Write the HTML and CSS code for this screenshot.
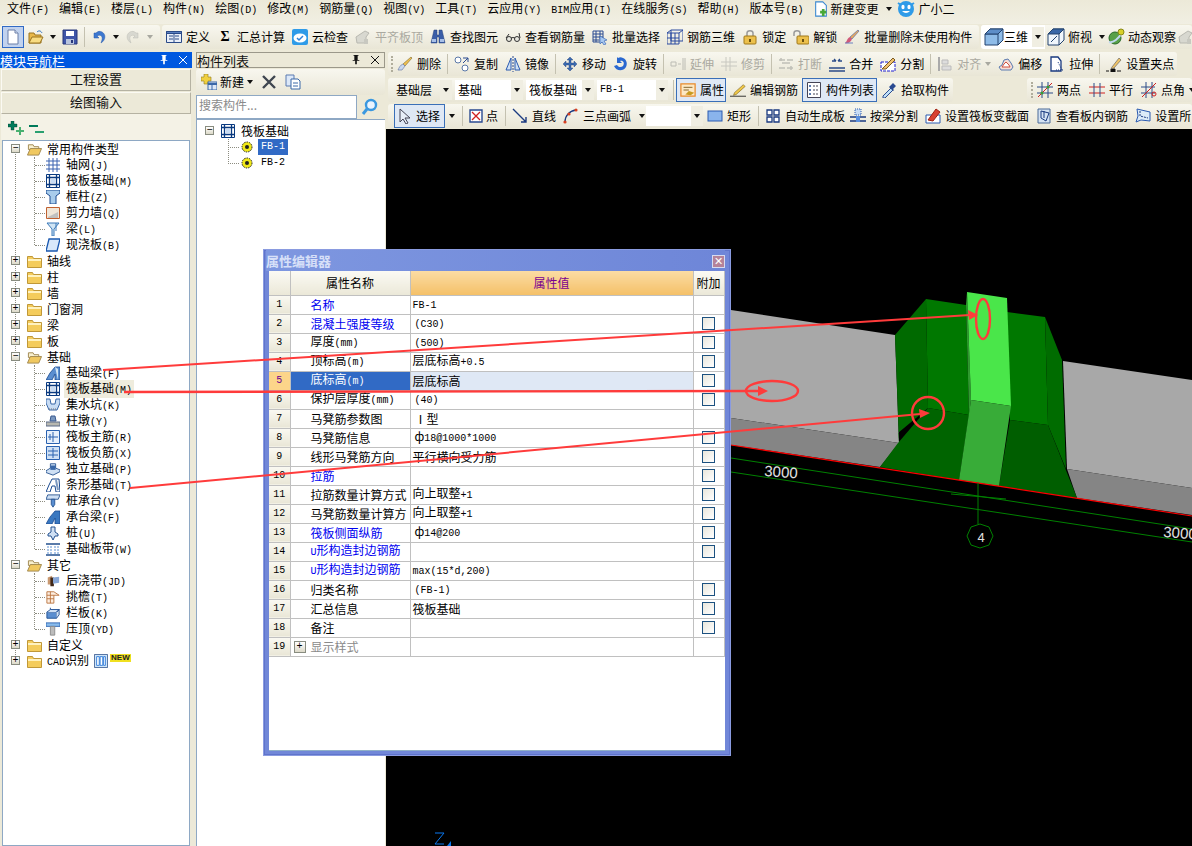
FILE: index.html
```html
<!DOCTYPE html>
<html lang="zh-CN">
<head>
<meta charset="utf-8">
<title>属性编辑器</title>
<link rel="stylesheet" href="styles.css">
</head>
<body>
<svg class="sprites" xmlns="http://www.w3.org/2000/svg">
<symbol id="doc" viewBox="0 0 16 16"><path d="M3 1h7l3 3v11H3z" fill="#fff" stroke="#6a7fa8"/><path d="M10 1v3h3" fill="#dde6f5" stroke="#6a7fa8"/></symbol>
<symbol id="open" viewBox="0 0 16 16"><path d="M1 4h5l1 2h6v8H1z" fill="#e8b84a" stroke="#9a7420"/><path d="M1 14l3-6h11l-3 6z" fill="#f8dc82" stroke="#9a7420"/><path d="M9 3c2-2 4-1 5 1" fill="none" stroke="#2a6fc0"/></symbol>
<symbol id="save" viewBox="0 0 16 16"><path d="M1 1h14v14H1z" fill="#3f55a8" stroke="#26367a"/><path d="M4 2h8v5H4z" fill="#fff"/><path d="M4 10h8v5H4z" fill="#b8c4de"/><path d="M9 11h2v3H9z" fill="#26367a"/></symbol>
<symbol id="undo" viewBox="0 0 16 16"><path d="M3 4v5h5L6 7c3-2 6 0 5 4l-1 3c5-3 5-9 1-11-2-1-4-1-6 1z" fill="#3d78d0" stroke="#2a58a8" stroke-width=".5"/></symbol>
<symbol id="redo" viewBox="0 0 16 16"><path d="M13 4v5H8l2-2c-3-2-6 0-5 4l1 3C1 11 1 5 5 3c2-1 4-1 6 1z" fill="#d8d8d0" stroke="#bdbdb4" stroke-width=".5"/></symbol>
<symbol id="def" viewBox="0 0 16 16"><path d="M.5 2.500h15v11H.5z" fill="#e8eef8" stroke="#2a4a88"/><path d="M.5 2.500h15v2H.5z" fill="#5a80c0" stroke="#2a4a88"/><path d="M3 7h4M3 10h4M9 7h4M9 10h4M8 5v8" stroke="#2a4a88" fill="none"/></symbol>
<symbol id="cloud" viewBox="0 0 16 16"><rect y="0" width="16" height="16" rx="2" fill="#2f9be8"/><ellipse cx="8" cy="9" rx="6.500" ry="4.500" fill="#fff"/><path d="M5 9l2 2 4-4" fill="none" stroke="#2f80d8" stroke-width="1.500"/></symbol>
<symbol id="flat" viewBox="0 0 16 16"><path d="M1 8l9-6 4 2-3 4v6H2z" fill="#d8d8d0" stroke="#b8b8b0"/><path d="M9 10h4v5H9z" fill="#c8c8c0"/></symbol>
<symbol id="binoc" viewBox="0 0 16 16"><path d="M4 1h3v5h2V1h3l3 13h-6V8H7v6H1z" fill="#3a5ea8" stroke="#24407a" stroke-width=".5"/><path d="M2 10h4v3H2zM10 10h4v3h-4z" fill="#a8c0e8"/></symbol>
<symbol id="glass" viewBox="0 0 16 16"><circle cx="4" cy="10" r="2.500" fill="#e8e8e0" stroke="#333"/><circle cx="12" cy="10" r="2.500" fill="#e8e8e0" stroke="#333"/><path d="M6 9q2-1 4 0M1 9l3-4M15 9l-1-5" fill="none" stroke="#333"/></symbol>
<symbol id="batch" viewBox="0 0 16 16"><path d="M1 2h10v11H1zM1 5h10M1 8h10M1 11h8M4 2v11M8 2v8" fill="none" stroke="#2a4a90"/><path d="M8 7l7 4-3 1 2 3-2 1-2-3-2 2z" fill="#a8c8f0" stroke="#2a5ab0" stroke-width=".6"/></symbol>
<symbol id="rebar" viewBox="0 0 16 16"><path d="M0 4l4-3h12M0 4h12l4-3M0 4v11M12 4v11M0 15h12M4 1v11h12V1M0 9h12M4 4v11M8 4v11" fill="none" stroke="#2a4aa0"/></symbol>
<symbol id="lock" viewBox="0 0 16 16"><path d="M5 7V4c0-3 6-3 6 0v3" fill="none" stroke="#999" stroke-width="1.500"/><rect x="2" y="7" width="12" height="8" rx="1" fill="#ecc04c" stroke="#a07818"/><path d="M7 10h2v3H7z" fill="#6a5010"/></symbol>
<symbol id="unlock" viewBox="0 0 16 16"><path d="M1 7V4c0-3 6-3 6 0v3" fill="none" stroke="#999" stroke-width="1.500"/><rect x="4" y="7" width="12" height="8" rx="1" fill="#ecc04c" stroke="#a07818"/><path d="M9 10h2v3H9z" fill="#6a5010"/></symbol>
<symbol id="brush" viewBox="0 0 16 16"><path d="M14 1l1 1-7 8-2-2z" fill="#e8a860" stroke="#4060a8" stroke-width=".6"/><path d="M6 8l2 2c-1 3-4 5-7 4 2-1 2-5 5-6z" fill="#d05a7a"/><path d="M1 14h8" stroke="#6a80c0"/></symbol>
<symbol id="cube" viewBox="0 0 20 18"><path d="M1 6l5-5h13v11l-5 5H1z" fill="#8fbce8" stroke="#23436e"/><path d="M1 6h13v11M14 6l5-5" fill="none" stroke="#23436e"/><path d="M1 6l5-5h13l-5 5z" fill="#5e8ec8" stroke="#23436e"/></symbol>
<symbol id="top" viewBox="0 0 18 18"><path d="M1 6l5-5h11v11l-5 5H1z" fill="#f0f6fc" stroke="#23436e"/><path d="M1 6l5-5h11l-5 5z" fill="#3a68a8" stroke="#23436e"/><path d="M12 6v11M12 6l5-5M4 14l6-6" fill="none" stroke="#23436e"/></symbol>
<symbol id="orbit" viewBox="0 0 18 18"><circle cx="8" cy="10" r="6" fill="#58a048" stroke="#2a6a28"/><path d="M2 14c4 1 10-3 13-10" fill="none" stroke="#c0d8f0" stroke-width="2"/><circle cx="14" cy="4" r="3" fill="#d8d028" stroke="#888818"/></symbol>
<symbol id="erase" viewBox="0 0 16 16"><path d="M14 1l1 1-7 8-2-2z" fill="#f0c050" stroke="#7a6a30" stroke-width=".6"/><path d="M6 8l2 2-3 4-4 0c1-2 2-5 5-6z" fill="#c8d8f0" stroke="#6070a0" stroke-width=".6"/></symbol>
<symbol id="copy" viewBox="0 0 16 16"><circle cx="4" cy="4" r="3" fill="#fff" stroke="#5a78a8"/><circle cx="11" cy="12" r="3" fill="#fff" stroke="#5a78a8"/><path d="M9 2h5v4M14 2L9 7" fill="none" stroke="#2a4a90"/></symbol>
<symbol id="mirror" viewBox="0 0 16 16"><path d="M6 2L1 14h5zM10 2l5 12h-5z" fill="#cfe0f4" stroke="#2a5ab0"/><path d="M8 0v16" stroke="#2a4a90" stroke-dasharray="2 1"/></symbol>
<symbol id="move" viewBox="0 0 16 16"><path d="M8 1l3 3H9v3h3V5l3 3-3 3V9H9v3h2l-3 3-3-3h2V9H4v2L1 8l3-3v2h3V4H5z" fill="#3a6ab0" stroke="#24407a" stroke-width=".4"/></symbol>
<symbol id="rotate" viewBox="0 0 16 16"><path d="M4 1v6h5L7 5c3-1 5 2 3 5-2 2-5 1-6-1l-3 1c2 5 9 6 12 1 2-4 0-8-3-9-2-1-3-1-5 0z" fill="#2a68d0"/></symbol>
<symbol id="extend" viewBox="0 0 16 16"><path d="M1 6h5v4H1zM8 8h3M13 2v12M15 2v12" fill="none" stroke="#bcbcb4"/></symbol>
<symbol id="trim" viewBox="0 0 16 16"><path d="M0 6h16M0 10h16M5 1v14M9 1v14" fill="none" stroke="#c8c8c0"/></symbol>
<symbol id="break" viewBox="0 0 16 16"><path d="M1 4h6M9 4h6M1 12h6M9 12h6M4 7h8M3 2v3M13 10v4" fill="none" stroke="#c0c0b8" stroke-width="1.500"/></symbol>
<symbol id="merge" viewBox="0 0 16 16"><path d="M0 12h16M0 15h16M3 5h4M9 5h4M7 5L5 3M9 5l2-2" fill="none" stroke="#2a4a88" stroke-width="1.300"/></symbol>
<symbol id="split" viewBox="0 0 16 16"><path d="M1 6h14v9H1z" fill="#fff" stroke="#2020d0" stroke-dasharray="3 1"/><path d="M2 13L13 2l2 2L6 13z" fill="#f0c070" stroke="#7a5a20"/></symbol>
<symbol id="align" viewBox="0 0 16 16"><path d="M2 1v14" stroke="#aaa" stroke-width="2"/><path d="M5 4h6v4H5zM5 10h9v4H5z" fill="#ddd" stroke="#bbb"/></symbol>
<symbol id="offset" viewBox="0 0 16 16"><path d="M1 11l3-2 2-5 4-1 3 4 2 4-2 3H3z" fill="#f6dcd4" stroke="#5a7ab0"/><path d="M4 11l2-3 2-2 3 3 1 2z" fill="#fff" stroke="#d05040"/></symbol>
<symbol id="stretch" viewBox="0 0 16 16"><path d="M2 1h7l3 4v10H2z" fill="#fff" stroke="#1a3a80" stroke-width="1.300"/><path d="M9 6l4 8M7 14h7" fill="none" stroke="#1a3a80" stroke-dasharray="1 1"/></symbol>
<symbol id="grip" viewBox="0 0 16 16"><path d="M0 15h3M5 13h4v3H5zM11 15h4" stroke="#111" fill="#111"/><path d="M6 11L13 2l2 2-7 8-3 1z" fill="#f0c468" stroke="#555" stroke-width=".6"/></symbol>
<symbol id="prop" viewBox="0 0 18 16"><path d="M1 1h16v14H1z" fill="#fde8c4" stroke="#e88a2c" stroke-width="1.400"/><path d="M4 5h10M4 8h6" stroke="#7a5a20"/><path d="M6 13l4-4 6 2-4 3z" fill="#c89a20"/></symbol>
<symbol id="pencil" viewBox="0 0 18 16"><path d="M5 11L15 2l2 2-10 9-3 1z" fill="#f0c848" stroke="#6a5010" stroke-width=".6"/><path d="M0 15h18" stroke="#222"/></symbol>
<symbol id="list" viewBox="0 0 14 16"><path d="M.5.500h13v15H.5z" fill="#fff" stroke="#445"/><path d="M2 3h2v2H2zM2 7h2v2H2zM2 11h2v2H2z" fill="#5a7ab0"/><path d="M6 4h6M6 8h6M6 12h6" stroke="#445" stroke-dasharray="2 1"/></symbol>
<symbol id="drop" viewBox="0 0 16 16"><path d="M2 14l8-8 2 2-8 8H2z" fill="#bfe0f8" stroke="#2a4a90"/><path d="M9 4l3-3 3 3-3 3 1 1-1 1-4-4 1-1z" fill="#2a4a90"/></symbol>
<symbol id="twopt" viewBox="0 0 16 16"><path d="M0 5h16M0 11h16M5 0v16M11 0v16" stroke="#2a4a88" fill="none"/><path d="M1 15L15 1" stroke="#d02020"/><circle cx="11" cy="5" r="1.500" fill="#3a9a30"/><circle cx="5" cy="11" r="1.500" fill="#3a9a30"/></symbol>
<symbol id="para" viewBox="0 0 16 16"><path d="M0 5h16M0 11h16" stroke="#d02020"/><path d="M5 1v14M11 1v14" stroke="#2a4a88"/></symbol>
<symbol id="angle" viewBox="0 0 16 16"><path d="M0 5h14M0 11h14M5 0v16M11 0v16" stroke="#2a4a88" fill="none"/><path d="M1 15L15 1" stroke="#d02020"/><circle cx="13" cy="12" r="2" fill="none" stroke="#d02020"/></symbol>
<symbol id="cursor" viewBox="0 0 16 16"><path d="M3 1l10 9H8l3 5-2 1-3-5-3 3z" fill="#e8eef8" stroke="#445"/></symbol>
<symbol id="point" viewBox="0 0 14 14"><path d="M1 1h12v12H1z" fill="#fff" stroke="#2a4a90" stroke-width="1.400"/><path d="M3 3l8 8M11 3l-8 8" stroke="#d02020" stroke-width="1.300"/></symbol>
<symbol id="line" viewBox="0 0 16 16"><path d="M1 1l13 13M14 9v5H9" fill="none" stroke="#1a3a80" stroke-width="1.400"/></symbol>
<symbol id="arc" viewBox="0 0 16 16"><path d="M2 14C2 8 6 3 13 2" fill="none" stroke="#1a3a80" stroke-width="1.300"/><circle cx="2" cy="14" r="1.600" fill="#d84020"/><circle cx="6" cy="6" r="1.600" fill="#d84020"/><circle cx="13" cy="2" r="1.600" fill="#d84020"/></symbol>
<symbol id="rect" viewBox="0 0 16 16"><rect x="1" y="3" width="14" height="10" fill="#8ab4ec" stroke="#2a5ab0"/></symbol>
<symbol id="auto" viewBox="0 0 16 16"><path d="M2 2h5v5H2zM9 2h5v5H9zM2 9h5v5H2zM9 9h5v5H9z" fill="#fff" stroke="#1a3a80" stroke-width="1.300"/></symbol>
<symbol id="bsplit" viewBox="0 0 16 16"><path d="M5 1h6v6H5z" fill="#c8dcf4" stroke="#2a5ab0" stroke-dasharray="1 1"/><path d="M0 9h16M0 13h16" stroke="#1a3a80" stroke-width="1.300"/><path d="M6 8h4v6H6z" fill="#5a90e0"/></symbol>
<symbol id="sect" viewBox="0 0 16 16"><path d="M1 7h14v8H1z" fill="#fff" stroke="#2a5ab0"/><path d="M3 12L11 1l4 3-7 9z" fill="#d84030" stroke="#a02010"/></symbol>
<symbol id="see" viewBox="0 0 16 16"><path d="M2 1h12v14H2z" fill="#d4e2f2" stroke="#4a6a98"/><path d="M5 3l8 2-3 8-5-3zM8 3v7" fill="none" stroke="#1a3a80"/></symbol>
<symbol id="setp" viewBox="0 0 16 16"><path d="M2 1l13 3v9l-9-1-5 2 2-6z" fill="#dcebf8" stroke="#2a5ab0"/><path d="M5 3v5l8 2" fill="none" stroke="#1a3a80" stroke-dasharray="2 1"/></symbol>
<symbol id="chg" viewBox="0 0 16 18"><path d="M2 1h8l4 4v12H2z" fill="#fff" stroke="#3a88d0" stroke-width="1.200"/><path d="M9 9h3v2h2v3h-2v3H9v-3H7v-3h2z" fill="#48a838"/></symbol>
<symbol id="mascot" viewBox="0 0 18 18"><circle cx="9" cy="9" r="8" fill="#2f9be8"/><path d="M1 3l3 2M17 3l-3 2" stroke="#2f9be8" stroke-width="2"/><ellipse cx="6" cy="7" rx="1.600" ry="2.200" fill="#fff"/><ellipse cx="12" cy="7" rx="1.600" ry="2.200" fill="#fff"/><path d="M5 11q4 4 8 0z" fill="#fff"/></symbol>
<symbol id="plusplus" viewBox="0 0 18 14"><path d="M3 0h3v3h3v3H6v3H3V6H0V3h3z" fill="#007a5a" stroke="#003a2a" stroke-width=".4"/><path d="M11 6h2v3h3v2h-3v3h-2v-3H8V9h3z" fill="#48b070"/></symbol>
<symbol id="minmin" viewBox="0 0 16 12"><path d="M0 2h9v2H0z" fill="#007a5a"/><path d="M6 8h9v2H6z" fill="#2aa070"/></symbol>
<symbol id="newitem" viewBox="0 0 16 16"><path d="M3 0h4v3h3v4H7v3H3V7H0V3h3z" fill="#f0d040" stroke="#907818" stroke-width=".6"/><path d="M7 8h9v8H7z" fill="#dce8f8" stroke="#3a68a8"/><path d="M7 10h9" stroke="#3a68a8" stroke-width="2"/><path d="M11 10v6" stroke="#3a68a8"/></symbol>
<symbol id="xbig" viewBox="0 0 14 14"><path d="M1 1l12 12M13 1L1 13" stroke="#3f4650" stroke-width="2.400"/></symbol>
<symbol id="paste" viewBox="0 0 16 16"><path d="M1 1h8v11H1z" fill="#dce8f8" stroke="#5a7ab0"/><path d="M6 5h7l2 2v8H6z" fill="#fff" stroke="#3a68a8"/><path d="M8 9h5M8 12h5" stroke="#3a68a8"/></symbol>
<symbol id="find" viewBox="0 0 18 18"><circle cx="10" cy="7" r="5" fill="#eaf4ff" stroke="#3a98e0" stroke-width="2.400"/><path d="M6 11l-4 5" stroke="#3a98e0" stroke-width="3"/></symbol>
<symbol id="fold" viewBox="0 0 15 14"><path d="M.5 2.500h5l1 2h8v9H.5z" fill="#f4cc5c" stroke="#c09838"/><path d="M1 5h13v2H1z" fill="#fff2c0"/></symbol>
<symbol id="foldo" viewBox="0 0 16 14"><path d="M1.500 2.500h5l1 2h5v3h-11z" fill="#f8f0d0" stroke="#a08850"/><path d="M.5 13.500l3-7h12l-3 7z" fill="#f0c860" stroke="#a08850"/></symbol>
<symbol id="grid" viewBox="0 0 14 14"><path d="M3 0v14M7 0v14M11 0v14M0 3h14M0 7h14M0 11h14" stroke="#3a62b0" fill="none"/></symbol>
<symbol id="raft" viewBox="0 0 14 14"><path d="M.5.500h13v13H.5z" fill="#fff" stroke="#0a3a80"/><path d="M0 3.500h14M0 10.500h14M3.500 0v14M10.500 0v14" stroke="#0a3a80" stroke-width="1.300"/><path d="M5 5h4v4H5z" fill="#c8dcf4"/></symbol>
<symbol id="col" viewBox="0 0 14 14"><path d="M0 0h14v3l-4 3v8H4V6L0 3z" fill="#a8ccec" stroke="#1a4a90"/></symbol>
<symbol id="wall" viewBox="0 0 14 14"><path d="M.5 1.500h13v11H.5z" fill="#f0e6d8" stroke="#c06030"/><path d="M2 11l10-5v6H2z" fill="#c0c0c0"/></symbol>
<symbol id="beam" viewBox="0 0 14 14"><path d="M1 1h12L8 7v7H6V7z" fill="#cfe4f4" stroke="#3a78b8"/><path d="M10 1v8" stroke="#3a78b8"/></symbol>
<symbol id="slab" viewBox="0 0 14 14"><path d="M3 1h11l-3 12H0z" fill="#d8e8fa" stroke="#1a58b0" stroke-width="1.300"/></symbol>
<symbol id="fbeam" viewBox="0 0 14 14"><path d="M0 14l4-7 5-6h5v13H9V8l-3 6z" fill="#5a8ed0" stroke="#1a4a90" stroke-width=".8"/><path d="M9 1l3 2v11" fill="#cfe4f4"/></symbol>
<symbol id="pit" viewBox="0 0 14 14"><path d="M0 1h4l1 5h4l1-5h4v4l-3 7H3L0 5z" fill="#c8dcf4" stroke="#3a68a8"/><path d="M3 11h8" stroke="#777" stroke-dasharray="1 1"/></symbol>
<symbol id="cap" viewBox="0 0 14 14"><path d="M5 2h4l1 5H4z" fill="#7a98c0" stroke="#3a5a90"/><path d="M0 8h14v4H0z" fill="#b8b8b0" stroke="#5a6a88"/></symbol>
<symbol id="rmain" viewBox="0 0 14 14"><path d="M.5.500h13v13H.5z" fill="#e6f0fc" stroke="#2a62b0"/><path d="M7 2v10M2 7h10M4 4v6" stroke="#2a62b0" fill="none"/></symbol>
<symbol id="rneg" viewBox="0 0 14 14"><path d="M.5.500h13v13H.5z" fill="#cfe0f4" stroke="#2a62b0"/><path d="M2 5h10M2 9h10M7 2v10" stroke="#2a62b0" fill="none"/></symbol>
<symbol id="iso" viewBox="0 0 16 14"><path d="M0 9l5-3V1h6v5l5 2v2l-8 4-8-3z" fill="#cfe0f4" stroke="#23508e"/><path d="M5 3h6v5H5z" fill="#3a68a8"/></symbol>
<symbol id="strip" viewBox="0 0 14 14"><path d="M0 14l3-7 3-6h7l1 13h-4L9 8H6L4 14z" fill="#fff" stroke="#1a4a90"/><path d="M10 2l2 10" stroke="#7a98c0" stroke-width="2"/></symbol>
<symbol id="pcap" viewBox="0 0 16 14"><path d="M2 0h14l-2 5H0z" fill="#cfe0f4" stroke="#23508e"/><path d="M6 5h4v6l-2 3-2-3z" fill="#5a8ed0" stroke="#23508e"/></symbol>
<symbol id="cbeam" viewBox="0 0 14 14"><path d="M0 14l4-7 5-6h5v13H9V8l-3 6z" fill="#3a78c0" stroke="#1a4a90" stroke-width=".8"/></symbol>
<symbol id="pile" viewBox="0 0 10 14"><path d="M3 1h4v5l3 2v2H7l-2 4-2-4H0V8l3-2z" fill="#cfe0f4" stroke="#23508e"/></symbol>
<symbol id="band" viewBox="0 0 14 14"><path d="M0 2h14M0 13h14" stroke="#23508e" stroke-width="1.400"/><path d="M2 4v8M5 4v8M9 4v8M12 4v8" stroke="#5a8ed0" stroke-dasharray="2 1"/></symbol>
<symbol id="post" viewBox="0 0 16 14"><path d="M2 3l5-2v10H2z" fill="#c89870"/><path d="M5 3h4v10H5z" fill="#402818"/><path d="M8 3l7-1v7l-7 1z" fill="#88a8d8"/></symbol>
<symbol id="cant" viewBox="0 0 16 14"><path d="M1 1h8l6 4H9v9H1z" fill="#fdeee0" stroke="#b8703a"/><path d="M1 5h8M1 9h8M5 1v13" stroke="#b8703a"/></symbol>
<symbol id="para2" viewBox="0 0 16 14"><path d="M1 6h11v7H1z" fill="#5a8ed0" stroke="#1a4a90"/><path d="M1 6l4-3h10l-3 3M12 6l3-3v6l-3 4M5 3V1" fill="#cfe0f4" stroke="#1a4a90"/></symbol>
<symbol id="press" viewBox="0 0 16 14"><path d="M0 0h16v4H0z" fill="#8abcec" stroke="#2a62b0"/><path d="M5 4h5v10H5z" fill="#bcbcbc" stroke="#888"/></symbol>
<symbol id="cad" viewBox="0 0 16 16"><path d="M.5.500h15v15H.5z" fill="#cfe6fa" stroke="#3a5a90"/><path d="M3 3h3v10H3zM7 3h3v10H7zM11 3h2v10h-2z" fill="#fff" stroke="#2a78d8"/></symbol>
<symbol id="gear" viewBox="0 0 12 12"><circle cx="6" cy="6" r="5" fill="#f0e818" stroke="#202020" stroke-dasharray="1.500 1"/><circle cx="6" cy="6" r="2" fill="#202020"/></symbol>
<symbol id="pin" viewBox="0 0 10 12"><path d="M2 0h6v1H7v5h2v1H6v4H4V7H1V6h2V1H2z" fill="currentColor"/></symbol>
<symbol id="close" viewBox="0 0 10 10"><path d="M1 1l8 8M9 1l-8 8" stroke="currentColor" fill="none"/></symbol>
</svg>

<div class="menu">
  <span>文件<b>(F)</b></span><span>编辑<b>(E)</b></span><span>楼层<b>(L)</b></span><span>构件<b>(N)</b></span><span>绘图<b>(D)</b></span><span>修改<b>(M)</b></span><span>钢筋量<b>(Q)</b></span><span>视图<b>(V)</b></span><span>工具<b>(T)</b></span><span>云应用<b>(Y)</b></span><span><b>BIM</b>应用<b>(I)</b></span><span>在线服务<b>(S)</b></span><span>帮助<b>(H)</b></span><span>版本号<b>(B)</b></span>
  <span class="t mi"><svg class="i"><use href="#chg"/></svg>新建变更<i class="dd"></i></span>
  <span class="t mi2"><svg class="i18"><use href="#mascot"/></svg>广小二</span>
</div>

<div class="row1">
  <div class="bar b-file">
    <span class="sel-doc"><svg class="i"><use href="#doc"/></svg></span>
    <svg class="i"><use href="#open"/></svg><i class="dd"></i>
    <svg class="i"><use href="#save"/></svg><i class="sep"></i>
    <svg class="i"><use href="#undo"/></svg><i class="dd"></i>
    <svg class="i"><use href="#redo"/></svg><i class="dd off"></i>
  </div>
  <div class="bar b-main">
    <span class="t"><svg class="i"><use href="#def"/></svg>定义</span>
    <span class="t"><em class="sigma">Σ</em>汇总计算</span>
    <span class="t"><svg class="i"><use href="#cloud"/></svg>云检查</span>
    <span class="t off"><svg class="i"><use href="#flat"/></svg>平齐板顶</span>
    <span class="t"><svg class="i"><use href="#binoc"/></svg>查找图元</span>
    <span class="t"><svg class="i"><use href="#glass"/></svg>查看钢筋量</span>
    <span class="t"><svg class="i"><use href="#batch"/></svg>批量选择</span>
    <span class="t"><svg class="i"><use href="#rebar"/></svg>钢筋三维</span>
    <span class="t"><svg class="i"><use href="#lock"/></svg>锁定</span>
    <span class="t"><svg class="i"><use href="#unlock"/></svg>解锁</span>
    <span class="t"><svg class="i"><use href="#brush"/></svg>批量删除未使用构件</span>
  </div>
  <div class="bar b-view">
    <span class="view3d"><svg class="i20"><use href="#cube"/></svg>三维<i class="ddbox"><i class="dd"></i></i></span>
    <span class="t"><svg class="i18"><use href="#top"/></svg>俯视<i class="dd"></i></span>
    <span class="t"><svg class="i18"><use href="#orbit"/></svg>动态观察</span>
    <span class="t off"><svg class="i"><use href="#flat"/></svg></span>
  </div>
</div>

<div class="main">
  <aside class="nav">
    <div class="title active"><span>模块导航栏</span><span class="ctl"><svg class="i10"><use href="#pin"/></svg><svg class="i10"><use href="#close"/></svg></span></div>
    <button class="navbtn" type="button">工程设置</button>
    <button class="navbtn" type="button">绘图输入</button>
    <div class="navtools"><svg class="pp"><use href="#plusplus"/></svg><svg class="mm"><use href="#minmin"/></svg></div>
    <div class="tree">
      <div class="n"><u class="ex">−</u><svg class="f"><use href="#foldo"/></svg><span>常用构件类型</span></div>
      <div class="kids">
        <div class="k"><svg class="i14"><use href="#grid"/></svg><span>轴网<b>(J)</b></span></div>
        <div class="k"><svg class="i14"><use href="#raft"/></svg><span>筏板基础<b>(M)</b></span></div>
        <div class="k"><svg class="i14"><use href="#col"/></svg><span>框柱<b>(Z)</b></span></div>
        <div class="k"><svg class="i14"><use href="#wall"/></svg><span>剪力墙<b>(Q)</b></span></div>
        <div class="k"><svg class="i14"><use href="#beam"/></svg><span>梁<b>(L)</b></span></div>
        <div class="k"><svg class="i14"><use href="#slab"/></svg><span>现浇板<b>(B)</b></span></div>
      </div>
      <div class="n"><u class="ex">+</u><svg class="f"><use href="#fold"/></svg><span>轴线</span></div>
      <div class="n"><u class="ex">+</u><svg class="f"><use href="#fold"/></svg><span>柱</span></div>
      <div class="n"><u class="ex">+</u><svg class="f"><use href="#fold"/></svg><span>墙</span></div>
      <div class="n"><u class="ex">+</u><svg class="f"><use href="#fold"/></svg><span>门窗洞</span></div>
      <div class="n"><u class="ex">+</u><svg class="f"><use href="#fold"/></svg><span>梁</span></div>
      <div class="n"><u class="ex">+</u><svg class="f"><use href="#fold"/></svg><span>板</span></div>
      <div class="n"><u class="ex">−</u><svg class="f"><use href="#foldo"/></svg><span>基础</span></div>
      <div class="kids">
        <div class="k"><svg class="i14"><use href="#fbeam"/></svg><span>基础梁<b>(F)</b></span></div>
        <div class="k"><svg class="i14"><use href="#raft"/></svg><span class="hl">筏板基础<b>(M)</b></span></div>
        <div class="k"><svg class="i14"><use href="#pit"/></svg><span>集水坑<b>(K)</b></span></div>
        <div class="k"><svg class="i14"><use href="#cap"/></svg><span>柱墩<b>(Y)</b></span></div>
        <div class="k"><svg class="i14"><use href="#rmain"/></svg><span>筏板主筋<b>(R)</b></span></div>
        <div class="k"><svg class="i14"><use href="#rneg"/></svg><span>筏板负筋<b>(X)</b></span></div>
        <div class="k"><svg class="i14"><use href="#iso"/></svg><span>独立基础<b>(P)</b></span></div>
        <div class="k"><svg class="i14"><use href="#strip"/></svg><span>条形基础<b>(T)</b></span></div>
        <div class="k"><svg class="i14"><use href="#pcap"/></svg><span>桩承台<b>(V)</b></span></div>
        <div class="k"><svg class="i14"><use href="#cbeam"/></svg><span>承台梁<b>(F)</b></span></div>
        <div class="k"><svg class="i14"><use href="#pile"/></svg><span>桩<b>(U)</b></span></div>
        <div class="k"><svg class="i14"><use href="#band"/></svg><span>基础板带<b>(W)</b></span></div>
      </div>
      <div class="n"><u class="ex">−</u><svg class="f"><use href="#foldo"/></svg><span>其它</span></div>
      <div class="kids">
        <div class="k"><svg class="i14"><use href="#post"/></svg><span>后浇带<b>(JD)</b></span></div>
        <div class="k"><svg class="i14"><use href="#cant"/></svg><span>挑檐<b>(T)</b></span></div>
        <div class="k"><svg class="i14"><use href="#para2"/></svg><span>栏板<b>(K)</b></span></div>
        <div class="k"><svg class="i14"><use href="#press"/></svg><span>压顶<b>(YD)</b></span></div>
      </div>
      <div class="n"><u class="ex">+</u><svg class="f"><use href="#fold"/></svg><span>自定义</span></div>
      <div class="n"><u class="ex">+</u><svg class="f"><use href="#fold"/></svg><span><b>CAD</b>识别</span><svg class="i16c"><use href="#cad"/></svg><span class="newtag">NEW</span></div>
    </div>
  </aside>

  <section class="list">
    <div class="title"><span>构件列表</span><span class="ctl"><svg class="i10"><use href="#pin"/></svg><svg class="i10"><use href="#close"/></svg></span></div>
    <div class="listbar"><span class="t"><svg class="i"><use href="#newitem"/></svg>新建<i class="dd"></i></span><svg class="i14"><use href="#xbig"/></svg><svg class="i"><use href="#paste"/></svg></div>
    <div class="search"><span class="input">搜索构件...</span><svg class="i18"><use href="#find"/></svg></div>
    <div class="ltree">
      <div class="lroot"><u class="ex">−</u><svg class="i14"><use href="#raft"/></svg><span>筏板基础</span></div>
      <div class="lkids">
        <div class="lk"><svg class="i12"><use href="#gear"/></svg><span class="cur">FB-1</span></div>
        <div class="lk"><svg class="i12"><use href="#gear"/></svg><span class="nm">FB-2</span></div>
      </div>
    </div>
  </section>

  <section class="work">
    <div class="wrow">
      <div class="bar b-edit">
        <i class="gripper"></i>
        <span class="t"><svg class="i"><use href="#erase"/></svg>删除</span><i class="sep"></i>
        <span class="t"><svg class="i"><use href="#copy"/></svg>复制</span>
        <span class="t"><svg class="i"><use href="#mirror"/></svg>镜像</span><i class="sep"></i>
        <span class="t"><svg class="i"><use href="#move"/></svg>移动</span>
        <span class="t"><svg class="i"><use href="#rotate"/></svg>旋转</span><i class="sep"></i>
        <span class="t off"><svg class="i"><use href="#extend"/></svg>延伸</span>
        <span class="t off"><svg class="i"><use href="#trim"/></svg>修剪</span><i class="sep"></i>
        <span class="t off"><svg class="i"><use href="#break"/></svg>打断</span>
        <span class="t"><svg class="i"><use href="#merge"/></svg>合并</span>
        <span class="t"><svg class="i"><use href="#split"/></svg>分割</span><i class="sep"></i>
        <span class="t off"><svg class="i"><use href="#align"/></svg>对齐<i class="dd off"></i></span>
        <span class="t"><svg class="i"><use href="#offset"/></svg>偏移</span>
        <span class="t"><svg class="i"><use href="#stretch"/></svg>拉伸</span><i class="sep"></i>
        <span class="t"><svg class="i"><use href="#grip"/></svg>设置夹点</span>
      </div>
    </div>
    <div class="wrow">
      <div class="bar b-sel">
        <span class="combo c1">基础层<i class="ddbox"><i class="dd"></i></i></span>
        <span class="combo c2">基础<i class="ddbox"><i class="dd"></i></i></span>
        <span class="combo c2">筏板基础<i class="ddbox"><i class="dd"></i></i></span>
        <span class="combo c4 mono">FB-1<i class="ddbox"><i class="dd"></i></i></span><i class="sep"></i>
        <span class="t act a1"><svg class="i"><use href="#prop"/></svg>属性</span>
        <span class="t"><svg class="i"><use href="#pencil"/></svg>编辑钢筋</span>
        <span class="t act a2"><svg class="i"><use href="#list"/></svg>构件列表</span>
        <span class="t"><svg class="i"><use href="#drop"/></svg>拾取构件</span>
      </div>
      <div class="bar b-axis">
        <i class="gripper"></i>
        <span class="t"><svg class="i"><use href="#twopt"/></svg>两点</span>
        <span class="t"><svg class="i"><use href="#para"/></svg>平行</span>
        <span class="t"><svg class="i"><use href="#angle"/></svg>点角<i class="dd"></i></span>
      </div>
    </div>
    <div class="wrow">
      <div class="bar b-draw">
        <span class="t act a3"><svg class="i"><use href="#cursor"/></svg>选择</span><i class="dd tight"></i><i class="sep"></i>
        <span class="t pt"><svg class="i14"><use href="#point"/></svg>点</span><i class="sep"></i>
        <span class="t"><svg class="i"><use href="#line"/></svg>直线</span>
        <span class="t arcitem"><svg class="i"><use href="#arc"/></svg>三点画弧<i class="dd"></i></span>
        <span class="combo c3"><i class="ddbox"><i class="dd"></i></i></span>
        <span class="t"><svg class="i"><use href="#rect"/></svg>矩形</span><i class="sep"></i>
        <span class="t"><svg class="i"><use href="#auto"/></svg>自动生成板</span>
        <span class="t pull"><svg class="i"><use href="#bsplit"/></svg>按梁分割</span>
        <span class="t"><svg class="i"><use href="#sect"/></svg>设置筏板变截面</span>
        <span class="t"><svg class="i"><use href="#see"/></svg>查看板内钢筋</span>
        <span class="t"><svg class="i"><use href="#setp"/></svg>设置所</span>
      </div>
    </div>
    <div class="canvas">
      <svg class="scene" viewBox="386 129 806 717" xmlns="http://www.w3.org/2000/svg">
        <path d="M731 310L895 335 899 443 731 418z" fill="#a8a8a8"/>
        <path d="M731 418L899 443 880 467 731 445z" fill="#858585"/>
        <path d="M1063 361L1192 380V488L1067 469z" fill="#a8a8a8"/>
        <path d="M1067 469L1192 488V515L1077 498z" fill="#858585"/>
        <path d="M895 335L926 299 928 408 898 433 899 443z" fill="#006a00"/>
        <path d="M926 299L966 305 969 415 928 408z" fill="#007800"/>
        <path d="M898 443L928 408 969 415 959 480 880 467z" fill="#006400"/>
        <path d="M1007 312L1045 317 1048 425 1010 420z" fill="#007800"/>
        <path d="M1045 317L1062 360 1066 469 1048 425z" fill="#006c00"/>
        <path d="M1010 420L1048 425 1077 498 999 486z" fill="#005e00"/>
        <path d="M966 305L967 292 971 400 969 415z" fill="#2e9a2e"/>
        <path d="M967 292L1007 298 1011 406 971 400z" fill="#4ae64a"/>
        <path d="M971 400L1011 406 999 486 959 480z" fill="#38ac38"/>
        <path d="M731 445L1192 516" stroke="#f00" stroke-width="1.200" fill="none"/>
        <path d="M731 458L1192 529M731 472L1192 542" stroke="#008000" fill="none"/>
        <path d="M951 494L1006 499" stroke="#008000" fill="none"/>
        <path d="M978 483V524" stroke="#008000" fill="none"/>
        <path d="M980 524l9 3 4 9-4 9-9 3-9-3-4-9 4-9z" fill="none" stroke="#008000"/>
        <text class="dim num4" x="981" y="542">4</text>
        <text class="dim" x="764" y="476" transform="rotate(4 764 476)">3000</text>
        <text class="dim" x="1163" y="537" transform="rotate(4 1163 537)">3000</text>
        <path d="M435 833h9l-9 11h9" fill="none" stroke="#0a78f0"/>
        <path d="M447 846l4-5v5z" fill="#0a78f0"/>
      </svg>
    </div>
  </section>
</div>

<div class="dialog">
  <div class="dtitle"><span>属性编辑器</span><u class="dclose">✕</u></div>
  <div class="dbody">
    <table class="ptable">
      <colgroup><col class="c-n"><col class="c-k"><col class="c-v"><col class="c-x"></colgroup>
      <thead><tr><th></th><th>属性名称</th><th class="vh">属性值</th><th>附加</th></tr></thead>
      <tbody>
        <tr><td class="no">1</td><td class="pk blue">名称</td><td class="v"><b>FB-1</b></td><td class="x"></td></tr>
        <tr><td class="no">2</td><td class="pk blue">混凝土强度等级</td><td class="v in"><b>(C30)</b></td><td class="x"><i class="cb"></i></td></tr>
        <tr><td class="no">3</td><td class="pk">厚度<b>(mm)</b></td><td class="v in"><b>(500)</b></td><td class="x"><i class="cb"></i></td></tr>
        <tr><td class="no">4</td><td class="pk">顶标高<b>(m)</b></td><td class="v">层底标高<b>+0.5</b></td><td class="x"><i class="cb"></i></td></tr>
        <tr class="cur-row"><td class="no">5</td><td class="pk">底标高<b>(m)</b></td><td class="v">层底标高</td><td class="x"><i class="cb"></i></td></tr>
        <tr><td class="no">6</td><td class="pk">保护层厚度<b>(mm)</b></td><td class="v in"><b>(40)</b></td><td class="x"><i class="cb"></i></td></tr>
        <tr><td class="no">7</td><td class="pk">马凳筋参数图</td><td class="v in">Ⅰ型</td><td class="x"></td></tr>
        <tr><td class="no">8</td><td class="pk">马凳筋信息</td><td class="v in">ф<b>18@1000*1000</b></td><td class="x"><i class="cb"></i></td></tr>
        <tr><td class="no">9</td><td class="pk">线形马凳筋方向</td><td class="v">平行横向受力筋</td><td class="x"><i class="cb"></i></td></tr>
        <tr><td class="no">10</td><td class="pk blue">拉筋</td><td class="v"></td><td class="x"><i class="cb"></i></td></tr>
        <tr><td class="no">11</td><td class="pk">拉筋数量计算方式</td><td class="v">向上取整<b>+1</b></td><td class="x"><i class="cb"></i></td></tr>
        <tr><td class="no">12</td><td class="pk">马凳筋数量计算方</td><td class="v">向上取整<b>+1</b></td><td class="x"><i class="cb"></i></td></tr>
        <tr><td class="no">13</td><td class="pk blue">筏板侧面纵筋</td><td class="v in">ф<b>14@200</b></td><td class="x"><i class="cb"></i></td></tr>
        <tr><td class="no">14</td><td class="pk blue"><b>U</b>形构造封边钢筋</td><td class="v"></td><td class="x"><i class="cb"></i></td></tr>
        <tr><td class="no">15</td><td class="pk blue"><b>U</b>形构造封边钢筋</td><td class="v"><b>max(15*d,200)</b></td><td class="x"></td></tr>
        <tr><td class="no">16</td><td class="pk">归类名称</td><td class="v in"><b>(FB-1)</b></td><td class="x"><i class="cb"></i></td></tr>
        <tr><td class="no">17</td><td class="pk">汇总信息</td><td class="v">筏板基础</td><td class="x"><i class="cb"></i></td></tr>
        <tr><td class="no">18</td><td class="pk">备注</td><td class="v"></td><td class="x"><i class="cb"></i></td></tr>
        <tr><td class="no">19</td><td class="pk grey"><u class="ex rowex">+</u>显示样式</td><td class="v"></td><td class="x"></td></tr>
      </tbody>
    </table>
  </div>
</div>

<svg class="arrows" viewBox="0 0 1192 846" xmlns="http://www.w3.org/2000/svg">
  <g fill="none" stroke="#ff3b3b" stroke-width="2">
    <path d="M103 370L970 315"/>
    <path d="M124 392L758 391" stroke-width="2.400"/>
    <path d="M130 488L920 414"/>
    <ellipse cx="983" cy="319" rx="7" ry="20" stroke-width="2.400"/>
    <ellipse cx="772" cy="391" rx="26" ry="10" stroke-width="2.400"/>
    <circle cx="928" cy="413" r="16" stroke-width="2.400"/>
  </g>
  <path d="M978 315l-10-5 1 10zM768 391l-10-5v10zM930 413l-11-4 1 9z" fill="#ff3b3b"/>
</svg>
</body>
</html>
```

FILE: styles.css
```css
* { box-sizing: border-box; }
html, body { margin: 0; padding: 0; }
body {
  position: relative;
  width: 1192px;
  height: 846px;
  overflow: hidden;
  background: #ece9d8;
  color: #000;
  font: 12px/16px "Noto Sans CJK SC", "Liberation Sans", sans-serif;
  white-space: nowrap;
}
b {
  font: 10px/14px "Liberation Mono", "Noto Sans CJK SC", monospace;
  white-space: pre;
}
i, u, em { font-style: normal; text-decoration: none; }
svg { display: block; flex: none; }
.sprites { display: none; }
.i { width: 16px; height: 16px; }
.i10 { width: 10px; height: 10px; }
.i12 { width: 12px; height: 12px; }
.i14 { width: 14px; height: 14px; }
.i18 { width: 18px; height: 18px; }
.i20 { width: 20px; height: 18px; }

.menu {
  display: flex;
  align-items: center;
  gap: 10px;
  height: 24px;
  padding: 0 0 6px 7px;
  background: linear-gradient(#ece9d8, #f1efe3);
}
.t { display: inline-flex; align-items: center; gap: 4px; flex: none; }
.t.off { color: #aaa9a0; }
.mi { gap: 1px; }
.mi .dd { margin-left: 7px; }
.mi2 { gap: 3px; margin-left: -5px; }

.dd {
  display: inline-block;
  width: 0;
  height: 0;
  flex: none;
  border: 3.5px solid transparent;
  border-top: 4px solid #111;
  border-bottom: 0;
}
.dd.off { border-top-color: #a8a8a0; }
.sep { width: 1px; height: 20px; flex: none; background: #c4c1b0; }
.gripper { width: 2px; height: 16px; flex: none; border-left: 2px dotted #b0ad9c; }

.row1 { display: flex; height: 27px; padding-top: 1px; gap: 2px; align-items: flex-start; }
.bar {
  display: flex;
  flex: none;
  align-items: center;
  height: 24px;
  border-radius: 3px;
  background: linear-gradient(#f8f7ef, #e9e6d6);
}
.b-file { width: 160px; padding-left: 2px; gap: 6px; }
.sel-doc { display: block; margin-right: -2px; padding: 2px; border: 1px solid #316ac5; background: #c1d2ee; }
.b-main { width: 817px; gap: 7px; padding-left: 4px; }
.sigma { width: 16px; text-align: center; font: bold 14px/16px "Liberation Serif", serif; }
.b-view { width: 211px; gap: 2px; overflow: hidden; }
.b-view .t { gap: 3px; }
.b-view .dd { margin-left: 4px; }
.view3d { display: flex; align-items: center; flex: none; width: 64px; height: 24px; padding-left: 3px; background: #fff; }
.view3d .ddbox { margin-left: 4px; }
.view3d .dd { margin-left: 0; }
.ddbox {
  display: flex;
  align-items: center;
  justify-content: center;
  width: 12px;
  height: 20px;
  flex: none;
  background: #f0eee2;
}

.main { display: flex; height: 795px; }
.nav { width: 192px; padding-top: 1px; display: flex; flex-direction: column; }
.title {
  display: flex;
  justify-content: space-between;
  align-items: center;
  height: 16px;
  font-size: 13px;
  line-height: 15px;
  border: 1px solid #9b988a;
  color: #111;
}
.title.active { background: #0058e0; border: 0; color: #fff; }
.ctl { display: flex; gap: 9px; padding-right: 4px; }
.navbtn {
  display: block;
  width: 190px;
  height: 22px;
  margin: 1px 1px 0;
  padding: 0 0 2px;
  font: 13px/18px "Noto Sans CJK SC", sans-serif;
  color: #111;
  background: #ece9d8;
  border: 1px solid #b5b2a2;
  border-top-color: #fbfaf3;
  border-left-color: #fbfaf3;
}
.navtools { display: flex; align-items: flex-end; gap: 3px; height: 26px; padding: 0 0 5px 7px; background: #f4f2e6; margin: 0 1px; }
.pp { width: 18px; height: 14px; }
.mm { width: 16px; height: 12px; }
.tree {
  position: relative;
  flex: 1;
  width: 188px;
  margin-left: 2px;
  padding: 0 0 0 8px;
  background: #fff;
  border: 1px solid #8ea8c4;
}
.tree::before {
  content: "";
  position: absolute;
  left: 12px;
  top: 10px;
  height: 510px;
  border-left: 1px dotted #8c8c80;
}
.n { position: relative; display: flex; align-items: center; height: 16px; padding-left: 16px; }
.ex {
  position: absolute;
  left: 0;
  top: 3px;
  display: flex;
  align-items: center;
  justify-content: center;
  width: 9px;
  height: 9px;
  font: 10px/9px "Liberation Mono", monospace;
  border: 1px solid #888c80;
  background: linear-gradient(#fff, #dcd9c8);
}
.f { width: 15px; height: 14px; margin-right: 5px; }
.kids { position: relative; margin-left: 23px; border-left: 1px dotted #8c8c80; }
.k { position: relative; display: flex; align-items: center; gap: 6px; height: 16px; padding-left: 11px; }
.k::before { content: ""; position: absolute; left: 0; top: 8px; width: 10px; border-top: 1px dotted #8c8c80; }
.k:last-child::after { content: ""; position: absolute; left: -1px; top: 9px; bottom: 0; width: 1px; background: #fff; }
.hl { margin-left: -2px; padding: 0 2px; background: #efecdd; }
.i16c { width: 14px; height: 14px; margin-left: 5px; }
.newtag { font: bold 8px/8px "Liberation Sans", sans-serif; color: #222; background: #f0e020; padding: 0 1px; margin: -7px 0 0 2px; }

.list { width: 189px; margin-left: 4px; padding-top: 1px; display: flex; flex-direction: column; }
.listbar { display: flex; align-items: center; gap: 9px; height: 26px; margin-top: 1px; padding-left: 5px; background: linear-gradient(#f8f7ef, #e9e6d6); border-radius: 3px; }
.listbar .t { gap: 3px; }
.search { display: flex; align-items: center; gap: 4px; height: 24px; }
.input { width: 161px; height: 24px; padding-left: 2px; line-height: 18px; font-size: 12px; color: #8a8a8a; background: #fff; border: 1px solid #8ea8c4; }
.ltree { flex: 1; padding: 3px 0 0 9px; background: #fff; border-left: 1px solid #8ea8c4; border-top: 1px solid #8ea8c4; }
.lroot { position: relative; display: flex; align-items: center; gap: 6px; height: 16px; padding-left: 15px; }
.lroot .ex { left: -1px; }
.lkids { position: relative; margin-left: 22px; }
.lkids::before { content: ""; position: absolute; left: 0; top: 0; height: 25px; border-left: 1px dotted #8c8c80; }
.lk { position: relative; display: flex; align-items: center; gap: 5px; height: 16px; padding-left: 13px; font: 10px/16px "Liberation Mono", monospace; }
.lk::before { content: ""; position: absolute; left: 0; top: 8px; width: 11px; border-top: 1px dotted #8c8c80; }
.cur, .nm { padding: 0 3px; height: 16px; }
.cur { background: #316ac5; color: #fff; }

.work { width: 806px; margin-left: 1px; display: flex; flex-direction: column; }
.wrow { display: flex; height: 26px; padding-top: 1px; padding-left: 2px; flex: none; }
.b-edit { width: 789px; padding-left: 3px; gap: 7px; }
.b-edit .gripper { margin-right: -3px; }
.b-edit .sep { margin: 0 -1px; }
.b-sel { width: 565px; padding-left: 8px; gap: 3px; }
.b-sel .sep { margin: 0 -1px 0 2px; }
.combo { display: flex; align-items: center; justify-content: space-between; height: 20px; padding-left: 3px; background: #fff; flex: none; }
.c1 { width: 56px; padding-left: 0; background: transparent; }
.c2 { width: 68px; }
.c4 { width: 71px; }
.c3 { width: 57px; margin: 0 -3px 0 -6px; justify-content: flex-end; }
.mono { font: 10px/16px "Liberation Mono", monospace; }
.act { height: 24px; padding: 0 3px; background: #dfe8f5; border: 1px solid #3a6fb8; }
.a1 { width: 50px; }
.a2 { width: 75px; }
.a3 { width: 51px; padding: 0 2px; gap: 3px; }
.b-sel > .t { margin-right: 1px; }
.b-axis { width: 165px; margin-left: 74px; padding-left: 4px; gap: 8px; overflow: hidden; }
.b-axis .gripper { margin-right: -4px; }
.b-draw { width: 804px; padding-left: 6px; gap: 7px; overflow: hidden; }
.b-draw .sep { margin-right: -1px; }
.tight { margin: 0 0 0 -3px; }
.pt { gap: 3px; }
.arcitem .dd { margin-left: 4px; }
.pull { margin-left: -2px; }
.canvas { flex: 1; background: #000; overflow: hidden; }
.scene { width: 806px; height: 717px; }
.dim { font: 15px "Liberation Sans", sans-serif; fill: #e0e0e0; }
.num4 { font-size: 13px; text-anchor: middle; }

.dialog {
  position: absolute;
  left: 263px;
  top: 249px;
  width: 468px;
  height: 507px;
  padding: 0 5px 5px;
  background: #7187d8;
  border: 1px solid #8a9be0;
  box-shadow: inset 0 0 0 1px #5f74cc;
}
.dtitle {
  display: flex;
  align-items: center;
  justify-content: space-between;
  height: 21px;
  margin-left: -3px;
  padding-top: 1px;
  font-weight: 700;
  font-size: 13px;
  color: #d7e0f8;
  background: linear-gradient(90deg, #7e97e0, #6e86d8);
}
.dclose {
  display: flex;
  align-items: center;
  justify-content: center;
  width: 13px;
  height: 13px;
  font: bold 11px/11px "DejaVu Sans", sans-serif;
  color: #fff;
  background: #b5839a;
  border: 1px solid #d8dcf0;
}
.dbody { height: 480px; background: #fff; border-bottom: 1px solid #8fb0c8; }
.ptable { width: 455px; table-layout: fixed; border-collapse: collapse; line-height: 14px; }
.c-n { width: 21px; }
.c-k { width: 120px; }
.c-v { width: 283px; }
.c-x { width: 31px; }
.ptable th, .ptable td { height: 19px; padding: 0; border: 1px solid #c0c0c0; overflow: hidden; }
.ptable thead th {
  height: 24px;
  font-weight: 400;
  background: linear-gradient(#fbfaf4, #ebe8d8);
}
.ptable thead th.vh { color: #7a0090; background: linear-gradient(#fbdca4, #f4c068); }
.ptable tr > :first-child { border-left: 0; }
.ptable thead tr > * { border-top: 0; }
.ptable td.no { text-align: center; background: linear-gradient(#faf9f2, #e9e6d6); font: 10px/14px "Liberation Mono", monospace; }
.ptable td.pk { padding-left: 20px; position: relative; }
.blue { color: #0000f0; }
.ptable td.v { padding-left: 2px; }
.ptable td.in { padding-left: 4px; }
.x { text-align: center; }
.cb { display: block; width: 13px; height: 13px; margin: 0 auto; border: 1px solid #1c5180; background: linear-gradient(135deg, #e8e6dc, #fff); }
.ptable .cur-row td.no { background: #fcd58a; color: #6a0090; }
.ptable .cur-row td.pk { background: #316ac5; color: #fff; }
.ptable .cur-row td.v { background: #dfe8f5; }
.grey { color: #8a8a8a; }
.rowex { left: 3px; top: 3px; width: 12px; height: 12px; color: #000; }

.arrows { position: absolute; left: 0; top: 0; width: 1192px; height: 846px; pointer-events: none; }
```
